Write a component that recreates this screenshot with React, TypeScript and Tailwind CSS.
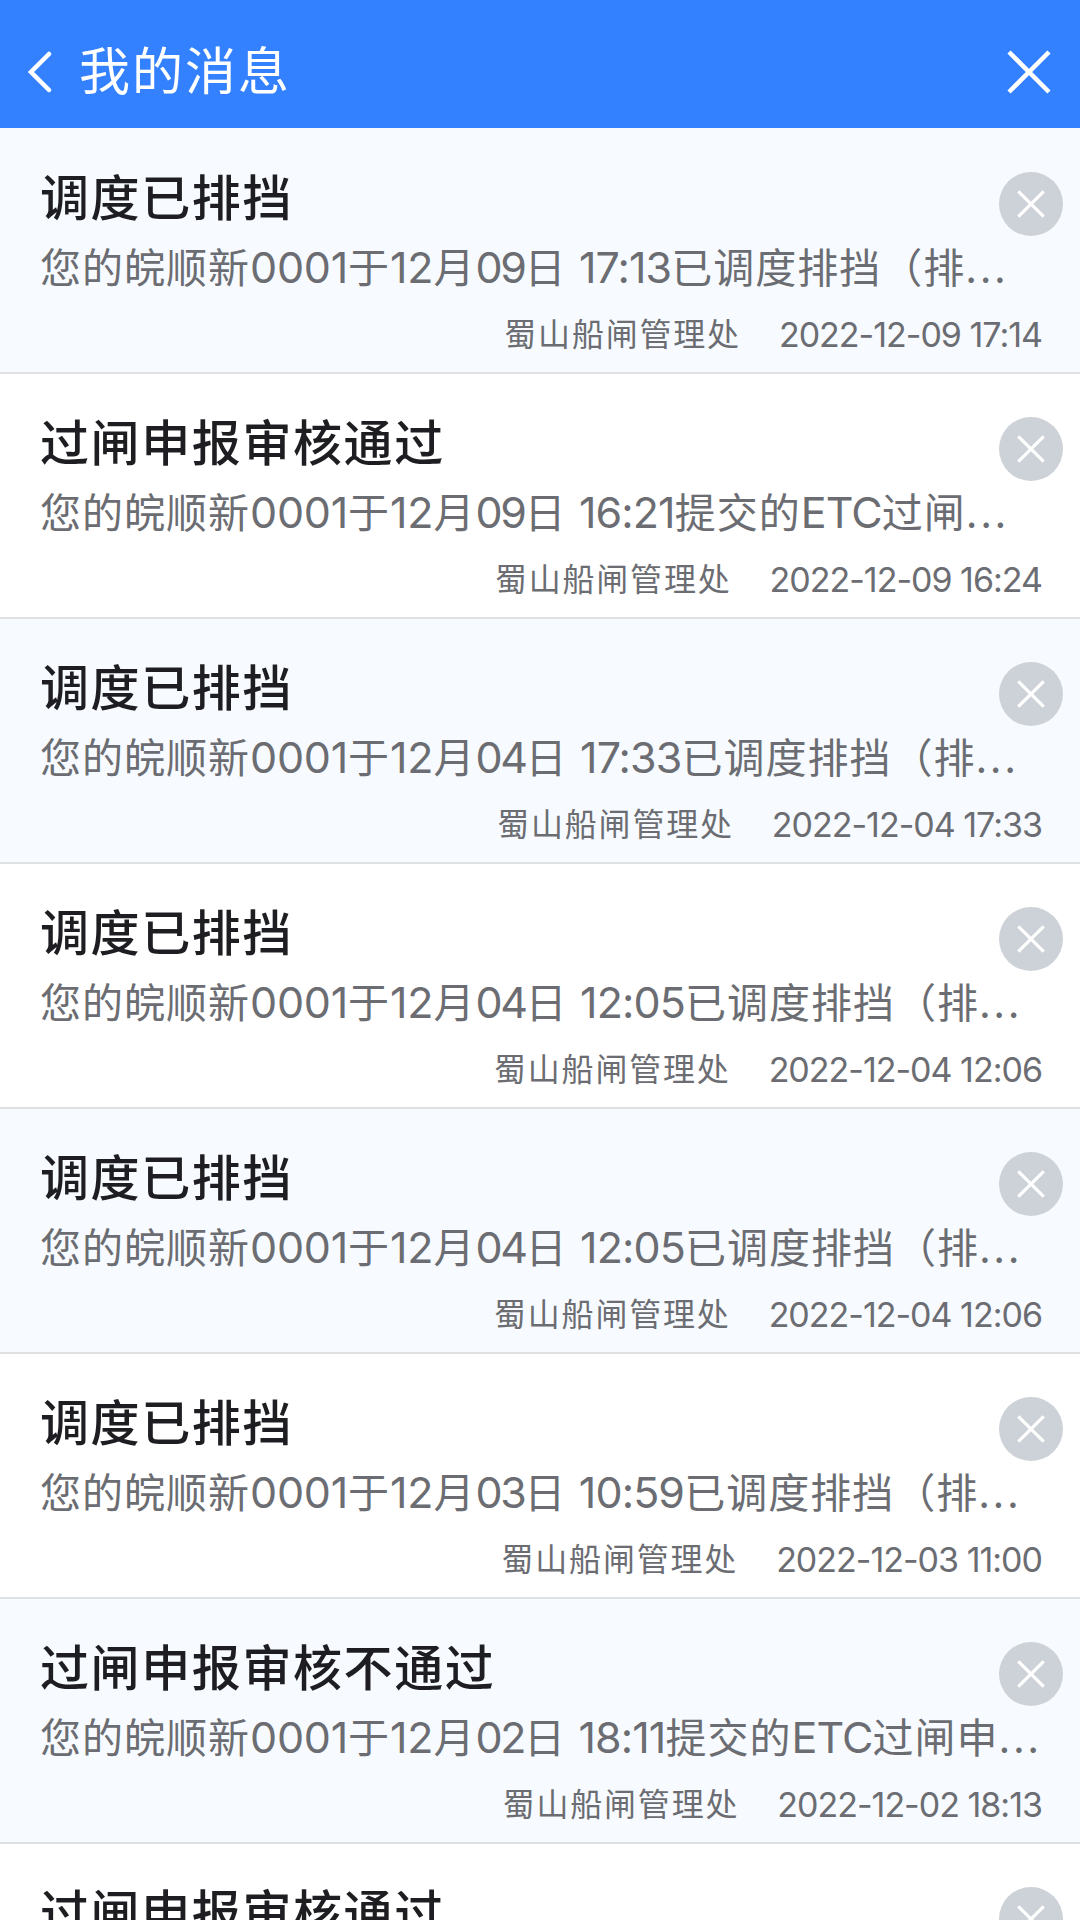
type Message = {
  id: number;
  title: string;
  event?: { date: [string, string]; clock: string; text: string; tag?: string; rest?: string };
  time?: string;
};

const ship = "您的皖顺新";
const sender = "蜀山船闸管理处";

const messages: Message[] = [
  { id: 1, title: "调度已排挡", event: { date: ["12", "09"], clock: "17:13", text: "已调度排挡（排" }, time: "2022-12-09 17:14" },
  { id: 2, title: "过闸申报审核通过", event: { date: ["12", "09"], clock: "16:21", text: "提交的", tag: "ETC", rest: "过闸" }, time: "2022-12-09 16:24" },
  { id: 3, title: "调度已排挡", event: { date: ["12", "04"], clock: "17:33", text: "已调度排挡（排" }, time: "2022-12-04 17:33" },
  { id: 4, title: "调度已排挡", event: { date: ["12", "04"], clock: "12:05", text: "已调度排挡（排" }, time: "2022-12-04 12:06" },
  { id: 5, title: "调度已排挡", event: { date: ["12", "04"], clock: "12:05", text: "已调度排挡（排" }, time: "2022-12-04 12:06" },
  { id: 6, title: "调度已排挡", event: { date: ["12", "03"], clock: "10:59", text: "已调度排挡（排" }, time: "2022-12-03 11:00" },
  { id: 7, title: "过闸申报审核不通过", event: { date: ["12", "02"], clock: "18:11", text: "提交的", tag: "ETC", rest: "过闸申" }, time: "2022-12-02 18:13" },
  { id: 8, title: "过闸申报审核通过" },
];

function Cross({ className }: { className: string }) {
  return (
    <svg viewBox="0 0 44 44" fill="none" stroke="currentColor" className={className}>
      <path d="M2 2 42 42M42 2 2 42" />
    </svg>
  );
}

function Header() {
  return (
    <header className="flex h-32 shrink-0 items-center bg-[#3381ff] pt-4 pr-[29px] pl-[17px] text-white">
      <button aria-label="返回" className="flex h-14 w-[62px] items-center">
        <svg viewBox="0 0 24 42" fill="none" stroke="currentColor" strokeWidth={4.5} strokeLinecap="round" className="ml-[11px] h-[42px] w-6">
          <path d="M21 3 3 21 21 39" />
        </svg>
      </button>
      <h1 className="-mt-px flex-1 text-[51px] leading-[60px] tracking-[2px]">我的消息</h1>
      <button aria-label="关闭">
        <Cross className="size-11 stroke-[4.5]" />
      </button>
    </header>
  );
}

function MessageRow({ message }: { message: Message }) {
  const { title, event, time } = message;

  return (
    <li className="flex h-[245px] shrink-0 flex-col border-b-2 border-[#dfe0e2] bg-white pr-[38px] pl-10 odd:bg-[#f7fbff] first:h-[246px] first:pt-px">
      <div className="mt-10 flex h-[60px] items-center justify-between">
        <h2 className="text-[49px] leading-[60px] font-medium tracking-[1.6px] text-[#1e1e22]">{title}</h2>
        <button aria-label="删除" className="mt-[9px] -mr-[21px] flex size-16 items-center justify-center rounded-full bg-[#cdd2d9] text-white">
          <Cross className="size-7 stroke-[5]" />
        </button>
      </div>

      {event && (
        <p className="mt-[10px] h-[56px] text-[41px] leading-[56px] tracking-[1px] whitespace-nowrap text-[#6b6d72]">
          {ship}
          <span className="text-[43px] tracking-[-0.2px]">0001</span>于
          <span className="text-[43px] tracking-[-0.2px]">{event.date[0]}</span>月
          <span className="text-[43px] tracking-[-2.4px]">{event.date[1]}</span>
          <span>日 </span>
          <span className="text-[43px] tracking-[-0.9px]">{event.clock}</span>
          {event.text}
          {event.tag && <span className="text-[43px] tracking-[-0.9px]">{event.tag}</span>}
          {event.rest}
          <span className="tracking-[2.6px]">...</span>
        </p>
      )}

      {time && (
        <div className="mt-4 flex items-start justify-end gap-[38px] leading-[48px] whitespace-nowrap text-[#6b6d72]">
          <span className="text-[32px] tracking-[1.8px]">{sender}</span>
          <time className="text-[34px] tracking-[-1px]">{time}</time>
        </div>
      )}
    </li>
  );
}

export default function App() {
  return (
    <div className="flex h-[1920px] w-[1080px] flex-col overflow-hidden bg-white font-[Inter,'Noto_Sans_CJK_SC',sans-serif]">
      <Header />
      <ul className="flex-1 overflow-hidden">
        {messages.map((message) => (
          <MessageRow key={message.id} message={message} />
        ))}
      </ul>
    </div>
  );
}
